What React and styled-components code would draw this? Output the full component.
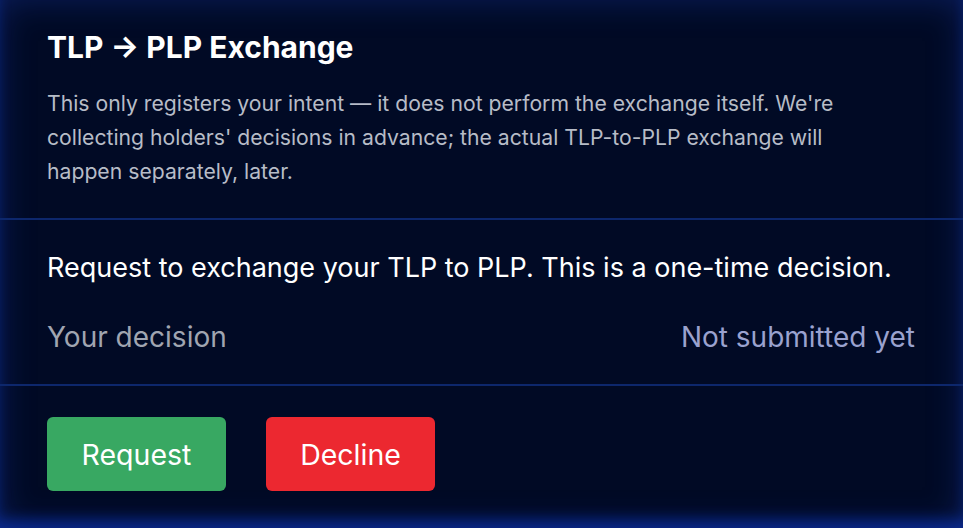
import React from "react";
import styled, { createGlobalStyle } from "styled-components";

const GlobalStyle = createGlobalStyle`
  html, body {
    margin: 0;
    padding: 0;
    background: #010a24;
  }
  * {
    box-sizing: border-box;
  }
`;

const Card = styled.div`
  width: 963px;
  height: 528px;
  background: #010a25;
  box-shadow: inset 0 0 34px rgba(24, 56, 160, 0.45),
    inset 0 -12px 14px -4px rgba(8, 44, 160, 0.75);
  font-family: Inter, "Liberation Sans", sans-serif;
  display: flex;
  flex-direction: column;
  overflow: hidden;
`;

const Section = styled.div`
  padding: ${(p) => p.$pad};
  border-bottom: ${(p) => (p.$divider ? "2px solid #0d276c" : "none")};
`;

const Title = styled.h2`
  margin: 0;
  font-size: 30px;
  line-height: 40px;
  font-weight: 700;
  color: #ffffff;
`;

const Note = styled.p`
  margin: 19px 0 0;
  font-size: 21.2px;
  line-height: 34px;
  color: #b7bcc7;
  max-width: 806px;
`;

const Lead = styled.div`
  font-size: 27px;
  line-height: 36px;
  color: #ffffff;
`;

const StatusRow = styled.div`
  margin-top: 32px;
  display: flex;
  justify-content: space-between;
  align-items: center;
  font-size: 28px;
  line-height: 38px;
`;

const Label = styled.span`
  color: #a0a5b1;
`;

const Value = styled.span`
  color: #9aa2cf;
`;

const Actions = styled.div`
  display: flex;
  gap: 40px;
`;

const Button = styled.button`
  height: 74px;
  width: ${(p) => p.$w}px;
  padding: 0;
  border: none;
  border-radius: 6px;
  background: ${(p) => p.$bg};
  color: #ffffff;
  font-family: inherit;
  font-size: 28.5px;
  font-weight: 400;
  cursor: pointer;
`;

export default function App() {
  return (
    <>
      <GlobalStyle />
      <Card>
        <Section $divider $pad="27px 47px 30px">
          <Title>TLP → PLP Exchange</Title>
          <Note>
            This only registers your intent — it does not perform the exchange
            itself. We're collecting holders' decisions in advance; the actual
            TLP-to-PLP exchange will happen separately, later.
          </Note>
        </Section>
        <Section $divider $pad="30px 48px 28px 47px">
          <Lead>
            Request to exchange your TLP to PLP. This is a one-time decision.
          </Lead>
          <StatusRow>
            <Label>Your decision</Label>
            <Value>Not submitted yet</Value>
          </StatusRow>
        </Section>
        <Section $pad="31px 47px">
          <Actions>
            <Button $w={179} $bg="#38a862">
              Request
            </Button>
            <Button $w={169} $bg="#ec2830">
              Decline
            </Button>
          </Actions>
        </Section>
      </Card>
    </>
  );
}
